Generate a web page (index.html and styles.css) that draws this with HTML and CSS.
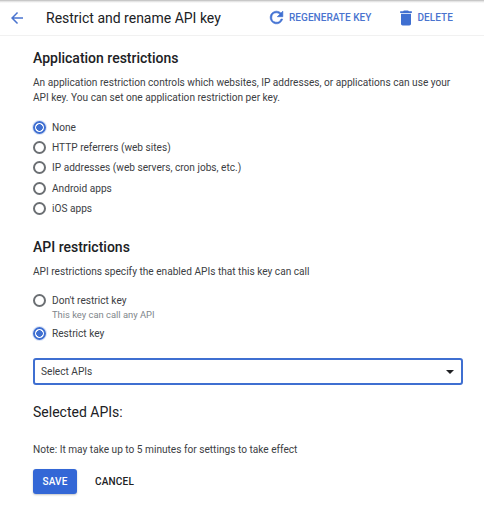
FILE: index.html
```html
<!DOCTYPE html>
<html lang="en">
<head>
<meta charset="utf-8">
<title>Restrict and rename API key</title>
<link rel="stylesheet" href="styles.css">
</head>
<body>
<header class="topbar">
  <svg class="back" viewBox="0 0 24 24" width="18" height="18"><path d="M20 11H7.83l5.59-5.59L12 4l-8 8 8 8 1.41-1.41L7.83 13H20z"/></svg>
  <h1 class="title">Restrict and rename API key</h1>
  <div class="action regen">
    <svg viewBox="0 0 24 24" width="19" height="19"><path d="M17.65 6.35A7.96 7.96 0 0 0 12 4a8 8 0 1 0 7.73 10h-2.08A6 6 0 1 1 12 6c1.66 0 3.14.69 4.22 1.78L13 11h7V4z"/></svg>
    <span>REGENERATE KEY</span>
  </div>
  <div class="action del">
    <svg viewBox="0 0 24 24" width="20" height="20"><path d="M6 19c0 1.1.9 2 2 2h8c1.1 0 2-.9 2-2V7H6zM19 4h-3.5l-1-1h-5l-1 1H5v2h14z"/></svg>
    <span>DELETE</span>
  </div>
</header>
<main class="content">
  <h2 class="heading first">Application restrictions</h2>
  <p class="desc">An application restriction controls which websites, IP addresses, or applications can use your API key. You can set one application restriction per key.</p>
  <div class="radios">
    <div class="radio on"><span class="dot"></span>None</div>
    <div class="radio"><span class="dot"></span>HTTP referrers (web sites)</div>
    <div class="radio"><span class="dot"></span>IP addresses (web servers, cron jobs, etc.)</div>
    <div class="radio"><span class="dot"></span>Android apps</div>
    <div class="radio"><span class="dot"></span>iOS apps</div>
  </div>
  <h2 class="heading second">API restrictions</h2>
  <p class="desc single">API restrictions specify the enabled APIs that this key can call</p>
  <div class="radios api">
    <div class="radio"><span class="dot"></span>Don't restrict key</div>
    <div class="hint">This key can call any API</div>
    <div class="radio on"><span class="dot"></span>Restrict key</div>
  </div>
  <div class="select"><span>Select APIs</span><span class="caret"></span></div>
  <div class="selected">Selected APIs:</div>
  <p class="note">Note: It may take up to 5 minutes for settings to take effect</p>
  <div class="buttons">
    <div class="btn save">SAVE</div>
    <div class="btn cancel">CANCEL</div>
  </div>
</main>
</body>
</html>
```
FILE: styles.css
```css
* { box-sizing: border-box; }
html, body { margin: 0; padding: 0; }
body {
  width: 484px;
  height: 511px;
  overflow: hidden;
  background: #fff;
  font-family: Roboto, "Liberation Sans", sans-serif;
  color: #3c4043;
  font-size: 10.15px;
  position: relative;
}
.topbar {
  height: 36px;
  display: flex;
  align-items: center;
  background: linear-gradient(#b4b4b4 0, #dcdcdc 1px, #fff 3px);
  border-bottom: 1px solid #f1f1f1;
  padding: 0 0 0 8px;
}
.back { fill: #4a74cf; flex: none; }
.title {
  margin: 0 0 0 20px;
  font-size: 14px;
  font-weight: 400;
  color: #202124;
  width: 206px;
  white-space: nowrap;
}
.action {
  display: flex;
  align-items: center;
  color: #4a74cf;
  font-size: 10px;
  font-weight: 500;
  letter-spacing: 0.05px;
  white-space: nowrap;
}
.action svg { fill: #3f6fd1; flex: none; }
.regen svg { stroke: #3f6fd1; stroke-width: 0.8; }
.regen { margin-left: 15px; gap: 3px; }
.del { margin-left: 25px; gap: 1px; }
.content { padding: 0 21px 0 33px; }
.heading {
  margin: 0;
  font-size: 14px;
  font-weight: 500;
  color: #202124;
  line-height: 18px;
}
.first { margin-top: 13px; }
.second { margin-top: 20px; }
.desc {
  margin: 8px 0 0;
  line-height: 15px;
  color: #3c4043;
}
.single { margin-top: 8px; }
.radios { margin-top: 12px; }
.radios.api { margin-top: 11px; }
.radio {
  display: flex;
  align-items: center;
  height: 20.3px;
  gap: 6px;
  white-space: nowrap;
}
.dot {
  width: 13px;
  height: 13px;
  border: 2px solid #6b6f73;
  border-radius: 50%;
  flex: none;
}
.on .dot {
  border-color: #3f6fd1;
  background: radial-gradient(circle, #3f6fd1 0, #3f6fd1 3px, #fff 3.6px);
  box-shadow: 0 0 0 1px #dbe5f8;
}
.hint {
  margin: -2px 0 0 19px;
  color: #80868b;
  font-size: 9.4px;
  line-height: 12px;
  height: 15px;
}
.select {
  margin-top: 14px;
  height: 27px;
  width: 430px;
  border: 2px solid #3f6fd1;
  border-radius: 3px;
  display: flex;
  align-items: center;
  justify-content: space-between;
  padding: 0 7px 0 6px;
  color: #3c4043;
}
.caret {
  width: 0;
  height: 0;
  border-left: 4.5px solid transparent;
  border-right: 4.5px solid transparent;
  border-top: 4.5px solid #202124;
}
.selected {
  margin-top: 18px;
  font-size: 14px;
  line-height: 18px;
  color: #202124;
}
.note { margin: 21px 0 0; line-height: 15px; }
.buttons { display: flex; align-items: center; margin-top: 12px; }
.btn {
  font-size: 10px;
  font-weight: 500;
  letter-spacing: 0.2px;
  height: 25px;
  line-height: 25px;
}
.save {
  width: 44px;
  text-align: center;
  background: #3367d6;
  color: #fff;
  border-radius: 3px;
  box-shadow: 0 1px 2px rgba(60,64,67,.3);
}
.cancel { margin-left: 18px; color: #202124; }
```
